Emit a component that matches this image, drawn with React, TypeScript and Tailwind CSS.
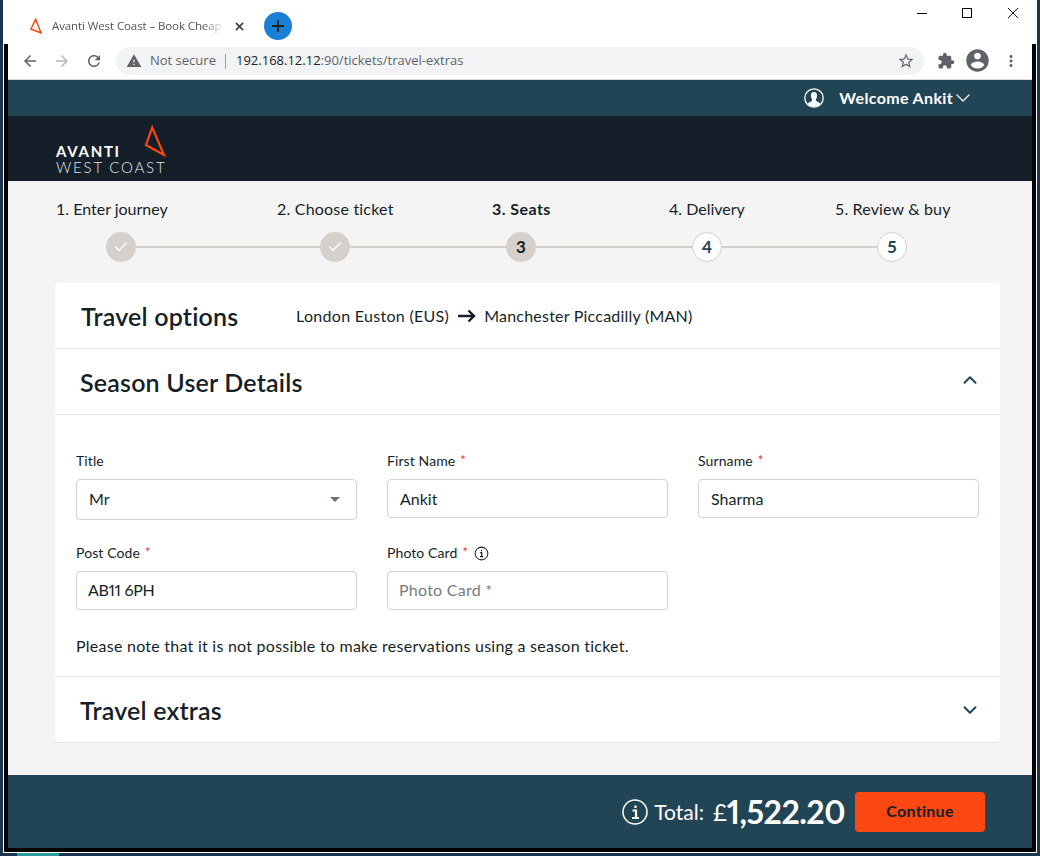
import React from 'react';
import { Check, ChevronDown, ChevronUp } from 'lucide-react';

const MD = ({ d, className }: { d: string; className?: string }) => (
  <svg viewBox="0 0 24 24" fill="currentColor" className={className}>
    <path d={d} />
  </svg>
);

const Logo = () => (
  <div className="relative w-[112px] h-[50px] text-white">
    <svg viewBox="0 0 24 36" className="absolute left-[87px] top-0 w-[24px] h-[36px]" fill="none">
      <path d="M9.2 3.5 L3 21 L21 31 Z" stroke="#fb4711" strokeWidth="2.2" />
    </svg>
    <div className="absolute left-0 top-[20px] text-[15px] leading-[14px] font-bold tracking-[1.7px]">AVANTI</div>
    <div className="absolute left-0 top-[36px] text-[15px] leading-[14px] font-light tracking-[1.8px] whitespace-nowrap text-[#e4e6e8]">WEST COAST</div>
  </div>
);

const TitleBar = () => (
  <div className="h-[44px] bg-white flex shrink-0 [font-family:'Open_Sans',sans-serif]">
    <svg viewBox="0 0 12 16" className="w-[12px] h-[16px] mt-[18px] ml-[26px]" fill="none">
      <path d="M5.6 1.2 L1 11 L11 15 Z" stroke="#fb4711" strokeWidth="1.5" />
    </svg>
    <div className="ml-[10px] mt-[17px] w-[172px] h-[18px] overflow-hidden whitespace-nowrap text-[11.5px] leading-[18px] text-[#50565b] tracking-[-0.1px] [mask-image:linear-gradient(to_right,black_88%,transparent)]">
      Avanti West Coast – Book Cheap
    </div>
    <svg viewBox="0 0 10 10" className="w-[9px] h-[9px] mt-[22px] ml-[11px]" stroke="#3c4043" strokeWidth="1.8">
      <path d="M1 1 L9 9 M9 1 L1 9" />
    </svg>
    <div className="w-[28px] h-[28px] rounded-full bg-[#1a80d6] mt-[12px] ml-[20px] flex items-center justify-center">
      <svg viewBox="0 0 14 14" className="w-[14px] h-[14px]" stroke="#202124" strokeWidth="2"><path d="M7 1 V13 M1 7 H13" /></svg>
    </div>
    <div className="ml-auto flex mt-[8px] pr-[18px]">
      <div className="w-[10px] h-[10px] flex items-center"><div className="w-[10px] h-[1px] bg-black" /></div>
      <div className="w-[10px] h-[10px] ml-[35px] border border-black" />
      <svg viewBox="0 0 10 10" className="w-[10px] h-[10px] ml-[36px]" stroke="black" strokeWidth="0.9"><path d="M0 0 L10 10 M10 0 L0 10" /></svg>
    </div>
  </div>
);

const Toolbar = () => (
  <div className="h-[36px] bg-white border-b border-[#dadce0] flex items-start pt-[3px] shrink-0 text-[#5f6368] [font-family:'Open_Sans',sans-serif]">
    <MD className="w-[18px] h-[18px] mt-[5px] ml-[13px]" d="M20 11H7.83l5.59-5.59L12 4l-8 8 8 8 1.41-1.41L7.83 13H20v-2z" />
    <MD className="w-[18px] h-[18px] mt-[5px] ml-[14px] text-[#b4b7ba]" d="M12 4l-1.41 1.41L16.17 11H4v2h12.17l-5.58 5.59L12 20l8-8z" />
    <MD className="w-[18px] h-[18px] mt-[5px] ml-[14px]" d="M17.65 6.35C16.2 4.9 14.21 4 12 4c-4.42 0-7.99 3.58-7.99 8s3.57 8 7.99 8c3.73 0 6.84-2.55 7.73-6h-2.08c-.82 2.33-3.04 4-5.65 4-3.31 0-6-2.69-6-6s2.69-6 6-6c1.66 0 3.14.69 4.22 1.78L13 11h7V4l-2.35 2.35z" />
    <div className="ml-[13px] w-[808px] h-[28px] rounded-full bg-[#f1f3f4] flex items-center pl-[10px] pr-[9px] text-[13px] whitespace-nowrap">
      <MD className="w-[16px] h-[16px]" d="M1 21h22L12 2 1 21zm12-3h-2v-2h2v2zm0-4h-2v-4h2v4z" />
      <span className="ml-[8px] w-[67px]">Not secure</span>
      <span className="ml-[8px] w-px h-[15px] bg-[#9aa0a6]" />
      <span className="ml-[10px] text-[#202124]">192.168.12.12</span>
      <span>:90/tickets/travel-extras</span>
      <MD className="w-[18px] h-[18px] ml-auto" d="M22 9.24l-7.19-.62L12 2 9.19 8.63 2 9.24l5.46 4.73L5.82 21 12 17.27 18.18 21l-1.63-7.03L22 9.24zM12 15.4l-3.76 2.27 1-4.28-3.32-2.88 4.38-.38L12 6.1l1.71 4.04 4.38.38-3.32 2.88 1 4.28L12 15.4z" />
    </div>
    <MD className="w-[18px] h-[18px] mt-[5px] ml-[13px]" d="M20.5 11H19V7c0-1.1-.9-2-2-2h-4V3.5C13 2.12 11.88 1 10.5 1S8 2.12 8 3.5V5H4c-1.1 0-1.99.9-1.99 2v3.8H3.5c1.49 0 2.7 1.21 2.7 2.7s-1.21 2.7-2.7 2.7H2V20c0 1.1.9 2 2 2h3.8v-1.5c0-1.49 1.21-2.7 2.7-2.7 1.49 0 2.7 1.21 2.7 2.7V22H17c1.1 0 2-.9 2-2v-4h1.5c1.38 0 2.5-1.12 2.5-2.5S21.88 11 20.5 11z" />
    <MD className="w-[27px] h-[27px] ml-[9px]" d="M12 2C6.48 2 2 6.48 2 12s4.48 10 10 10 10-4.48 10-10S17.52 2 12 2zm0 3c1.66 0 3 1.34 3 3s-1.34 3-3 3-3-1.34-3-3 1.34-3 3-3zm0 14.2c-2.5 0-4.71-1.28-6-3.22.03-1.99 4-3.08 6-3.08 1.99 0 5.97 1.09 6 3.08-1.29 1.94-3.5 3.22-6 3.22z" />
    <MD className="w-[18px] h-[18px] mt-[5px] ml-[11px]" d="M12 8c1.1 0 2-.9 2-2s-.9-2-2-2-2 .9-2 2 .9 2 2 2zm0 2c-1.1 0-2 .9-2 2s.9 2 2 2 2-.9 2-2-.9-2-2-2zm0 6c-1.1 0-2 .9-2 2s.9 2 2 2 2-.9 2-2-.9-2-2-2z" />
  </div>
);

const StepCircle = ({ done, n, current }: { done?: boolean; n?: number; current?: boolean }) => {
  if (done) {
    return (
      <div className="w-[30px] h-[30px] rounded-full bg-[#d5d0ca] flex items-center justify-center shrink-0">
        <Check className="w-[16px] h-[16px] text-white" strokeWidth={2} />
      </div>
    );
  }
  if (current) {
    return <div className="w-[30px] h-[30px] rounded-full bg-[#d5d0ca] flex items-center justify-center shrink-0 text-[17px] font-bold text-[#151f29]">{n}</div>;
  }
  return <div className="w-[30px] h-[30px] rounded-full bg-white border border-[#d5d0ca] flex items-center justify-center shrink-0 text-[17px] font-bold text-[#224556]">{n}</div>;
};

const Line = ({ className }: { className: string }) => <div className={`h-[2px] bg-[#d5d0ca] ${className}`} />;

const Stepper = () => (
  <div className="pl-[48px] pt-[18px] text-[16px] text-[#151f29]">
    <div className="flex h-[20px] leading-[20px] whitespace-nowrap">
      <span className="w-[221px]">1. Enter journey</span>
      <span className="w-[215px] tracking-[0.2px]">2. Choose ticket</span>
      <span className="w-[177px] font-bold tracking-[0.45px]">3. Seats</span>
      <span className="w-[166px]">4. Delivery</span>
      <span className="tracking-[0.15px]">5. Review &amp; buy</span>
    </div>
    <div className="flex items-center mt-[13px] ml-[50px]">
      <StepCircle done />
      <Line className="w-[184px]" />
      <StepCircle done />
      <Line className="w-[156px]" />
      <StepCircle current n={3} />
      <Line className="w-[156px]" />
      <StepCircle n={4} />
      <Line className="w-[155px]" />
      <StepCircle n={5} />
    </div>
  </div>
);

const FieldLabel = ({ label, required, info }: { label: string; required?: boolean; info?: boolean }) => (
  <label className="flex items-center h-[20px] text-[14px] leading-[20px] tracking-[0.1px] text-[#151f29]">
    {label}
    {required && <span className="text-[#e5322d] ml-[5px] text-[13px] -mt-[3px]">*</span>}
    {info && (
      <svg viewBox="0 0 16 16" className="w-[15px] h-[15px] ml-[6px]" fill="none" stroke="#151f29">
        <circle cx="8" cy="8" r="6.8" strokeWidth="1.1" />
        <path d="M6.6 7 H8.2 V11.4 M6.4 11.4 H9.8 M8 4.2 V5.6" strokeWidth="1.3" />
      </svg>
    )}
  </label>
);

const Field = ({ label, required, info, value, placeholder, className }: { label: string; required?: boolean; info?: boolean; value?: string; placeholder?: string; className: string }) => (
  <div>
    <FieldLabel label={label} required={required} info={info} />
    <input
      readOnly
      value={value ?? ''}
      placeholder={placeholder}
      className={`mt-[8px] w-full h-[39px] rounded-[4px] border border-[#ced4da] bg-white pr-[12px] text-[16px] text-[#151f29] placeholder:text-[#777b80] outline-none ${className}`}
    />
  </div>
);

const Card = () => (
  <div className="mt-[21px] ml-[47px] w-[945px] bg-white rounded-[4px] border-b border-[#e6e6e6] text-[#151f29]">
    <div className="h-[66px] border-b border-[#e6e6e6] flex items-center pl-[26px]">
      <h2 className="w-[215px] pt-[2px] text-[25px] tracking-[0.2px] font-semibold whitespace-nowrap">Travel options</h2>
      <span className="text-[16px] tracking-[0.3px]">London Euston (EUS)</span>
      <svg viewBox="0 0 18 14" className="w-[18px] h-[14px] ml-[9px] mr-[8px]" fill="none" stroke="#151f29" strokeWidth="2.4">
        <path d="M0 7 H16 M10.5 1.5 L16 7 L10.5 12.5" />
      </svg>
      <span className="text-[16px] tracking-[0.22px]">Manchester Piccadilly (MAN)</span>
    </div>
    <div className="h-[66px] border-b border-[#e6e6e6] flex items-center justify-between pl-[25px] pr-[19px]">
      <h2 className="pt-[2px] text-[25px] tracking-[0.2px] font-semibold">Season User Details</h2>
      <ChevronUp className="w-[22px] h-[22px] text-[#224556] -mt-[3px]" strokeWidth={2.2} />
    </div>
    <div className="h-[262px] border-b border-[#e6e6e6] px-[21px] pt-[36px]">
      <div className="grid grid-cols-3 gap-x-[30px]">
        <div>
          <FieldLabel label="Title" />
          <div className="mt-[8px] h-[41px] rounded-[4px] border border-[#ced4da] bg-white flex items-center justify-between pl-[12px] pr-[16px] pb-[2px] text-[16px]">
            Mr
            <svg viewBox="0 0 10 5" className="w-[10px] h-[5px] mt-[2px]"><path d="M0 0 H10 L5 5 Z" fill="#6b6f73" /></svg>
          </div>
        </div>
        <Field label="First Name" required value="Ankit" className="pl-[12px]" />
        <Field label="Surname" required value="Sharma" className="pl-[12px]" />
      </div>
      <div className="grid grid-cols-3 gap-x-[30px] mt-[23px]">
        <Field label="Post Code" required value="AB11 6PH" className="pl-[11px] pb-[2px] proportional-nums tracking-[-0.3px]" />
        <Field label="Photo Card" required info placeholder="Photo Card *" className="pl-[11px] pb-[2px] tracking-[0.25px]" />
      </div>
      <p className="mt-[26px] text-[16px] leading-[20px] tracking-[0.25px] whitespace-nowrap">Please note that it is not possible to make reservations using a season ticket.</p>
    </div>
    <div className="h-[65px] flex items-center justify-between pl-[25px] pr-[19px]">
      <h2 className="pt-[2px] text-[25px] tracking-[0.2px] font-semibold">Travel extras</h2>
      <ChevronDown className="w-[22px] h-[22px] text-[#224556] mt-[1px]" strokeWidth={2.2} />
    </div>
  </div>
);

const Footer = () => (
  <div className="mt-auto h-[73px] bg-[#224556] flex items-center justify-end pr-[47px] text-white shrink-0">
    <svg viewBox="0 0 26 26" className="w-[26px] h-[26px]" fill="none" stroke="white">
      <circle cx="13" cy="13" r="12" strokeWidth="1.5" />
      <path d="M10.5 11.5 H14 V19 M10 19 H17 M13.5 6.5 V9" strokeWidth="2.2" />
    </svg>
    <span className="ml-[6px] text-[21px]">Total:</span>
    <span className="ml-[9px] text-[24px]">£</span>
    <span className="text-[32px] font-bold proportional-nums tracking-[-0.5px]">1,522.20</span>
    <button className="ml-[10px] w-[130px] h-[40px] pb-[2px] rounded-[4px] bg-[#fb4711] text-[16px] font-bold tracking-[0.3px] text-[#151f29]">Continue</button>
  </div>
);

const App: React.FC = () => {
  return (
    <div className="relative w-[1040px] h-[856px] bg-[#1b3550] overflow-hidden pl-[3px] [font-family:Lato,sans-serif]">
      {/* desktop icon peeking out under the window */}
      <div className="absolute left-[17px] top-[853px] w-[42px] h-[3px] bg-[#2f9c9c]" />

      <div className="w-[1034px] h-[853px] border-x border-b border-white flex flex-col">
        <TitleBar />
        <div className="flex-1 flex flex-col min-h-0 border-x-4 border-b-4 border-black bg-[#f4f4f4]">
          <Toolbar />
          <div className="h-[36px] bg-[#224556] flex items-center justify-end pr-[57px] text-white shrink-0">
            <svg viewBox="0 0 20 20" className="w-[20px] h-[20px]" fill="none">
              <circle cx="10" cy="10" r="9.2" stroke="white" strokeWidth="1.3" />
              <path d="M10 4 C12.5 4 13.4 6 13 8.5 C12.7 10.3 11.8 11.5 11.8 12.3 C12.5 13.8 15.5 14.2 16.5 16 A9 9 0 0 1 3.5 16 C4.5 14.2 7.5 13.8 8.2 12.3 C8.2 11.5 7.3 10.3 7 8.5 C6.6 6 7.5 4 10 4 Z" fill="white" />
            </svg>
            <span className="ml-[15px] text-[16px] font-bold tracking-[0.35px]">Welcome Ankit</span>
            <ChevronDown className="w-[24px] h-[24px] -ml-[2px]" strokeWidth={1.2} />
          </div>
          <div className="h-[65px] bg-[#151f29] pl-[48px] pt-[8px] shrink-0">
            <Logo />
          </div>
          <Stepper />
          <Card />
          <Footer />
        </div>
      </div>
    </div>
  );
};

export default App;
